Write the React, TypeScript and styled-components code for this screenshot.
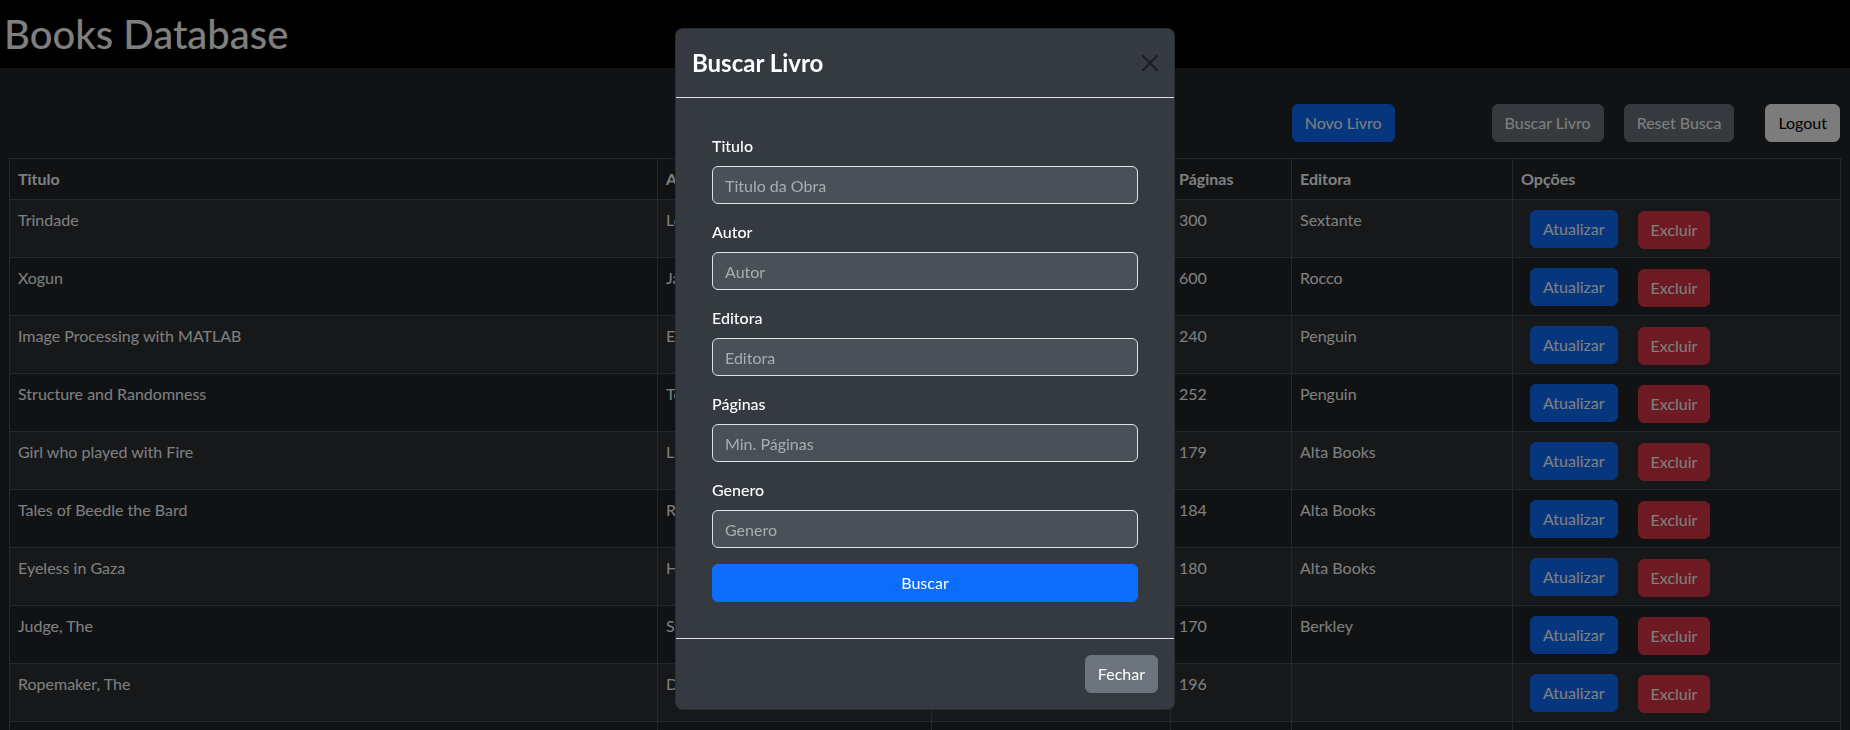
import React from 'react'
import styled, { createGlobalStyle, css } from 'styled-components'

const GlobalStyle = createGlobalStyle`
  html, body {
    margin: 0;
    padding: 0;
  }
  body {
    background: #212529;
    color: #ffffff;
    font-family: Lato, "Noto Sans", "Liberation Sans", sans-serif;
    font-size: 16px;
    line-height: 1.5;
    overflow: hidden;
  }
  * { box-sizing: border-box; }
`

const TopBar = styled.header`
  background: #000;
  padding: 10px 4px;
`

const PageTitle = styled.h1`
  margin: 0;
  font-size: 40px;
  font-weight: 500;
  line-height: 1.2;
  color: #fff;
`

const Toolbar = styled.div`
  display: flex;
  justify-content: flex-end;
  margin: 36px 10px 16px 9px;
`

const variants = {
  primary: css`background: #0d6efd; border-color: #0d6efd; color: #fff;`,
  secondary: css`background: #6c757d; border-color: #6c757d; color: #fff;`,
  danger: css`background: #dc3545; border-color: #dc3545; color: #fff;`,
  light: css`background: #f8f9fa; border-color: #f8f9fa; color: #000;`,
}

type Variant = keyof typeof variants

const Btn = styled.button<{ $variant: Variant; $ml?: number; $mt?: number }>`
  font-family: inherit;
  font-size: 16px;
  line-height: 24px;
  padding: 6px 12px;
  border: 1px solid transparent;
  border-radius: 6px;
  cursor: pointer;
  white-space: nowrap;
  margin-left: ${p => p.$ml || 0}px;
  margin-top: ${p => p.$mt || 0}px;
  ${p => variants[p.$variant]}
`

const Table = styled.table`
  width: 1831px;
  margin-left: 9px;
  border-collapse: collapse;
  table-layout: fixed;
  color: #fff;
  vertical-align: top;
`

const Th = styled.th`
  text-align: left;
  font-weight: 700;
  padding: 8px;
  border: 1px solid #495057;
  line-height: 24px;
`

const Row = styled.tr`
  tbody &:nth-child(odd) {
    background: rgba(255, 255, 255, 0.05);
  }
`

const Td = styled.td`
  padding: 8px;
  border: 1px solid #495057;
  line-height: 24px;
  height: 58px;
  vertical-align: top;
`

const Actions = styled.div`
  display: flex;
  align-items: flex-start;
  height: 41px;
  padding-left: 1px;
`

const Backdrop = styled.div`
  position: fixed;
  inset: 0;
  background: rgba(0, 0, 0, 0.5);
`

const ModalLayer = styled.div`
  position: fixed;
  inset: 0;
  overflow: hidden;
`

const Dialog = styled.div`
  width: 500px;
  margin: 28px auto;
  background: #343a40;
  border: 1px solid rgba(0, 0, 0, 0.175);
  border-radius: 8px;
  color: #fff;
`

const ModalHeader = styled.div`
  display: flex;
  align-items: center;
  justify-content: space-between;
  padding: 16px;
  border-bottom: 1px solid #dee2e6;
`

const ModalTitle = styled.h4`
  margin: 0;
  font-size: 24px;
  font-weight: 700;
  line-height: 1.5;
`

const CloseBtn = styled.button`
  width: 16px;
  height: 16px;
  padding: 0;
  border: 0;
  background: transparent;
  display: flex;
  cursor: pointer;
`

const ModalBody = styled.div`
  padding: 16px;
`

const SearchForm = styled.form`
  padding: 20px;
`

const Field = styled.div`
  margin-bottom: 16px;
`

const Label = styled.label`
  display: block;
  margin-bottom: 8px;
  line-height: 24px;
  font-weight: 500;
`

const Input = styled.input`
  display: block;
  width: 100%;
  height: 38px;
  padding: 6px 12px;
  font-family: inherit;
  font-size: 16px;
  line-height: 24px;
  color: #fff;
  background: #495057;
  border: 1px solid #dee2e6;
  border-radius: 6px;
  &::placeholder {
    color: #a9aeb3;
  }
`

const Submit = styled(Btn)`
  display: block;
  width: 100%;
`

const ModalFooter = styled.div`
  display: flex;
  justify-content: flex-end;
  padding: 12px;
  border-top: 1px solid #dee2e6;
  & > * { margin: 4px; }
`

const books = [
  { titulo: 'Trindade', autor: 'Leon Uris', genero: 'Romance', paginas: 300, editora: 'Sextante' },
  { titulo: 'Xogun', autor: 'James Clavell', genero: 'Romance', paginas: 600, editora: 'Rocco' },
  { titulo: 'Image Processing with MATLAB', autor: 'Eduardo Gomes', genero: 'Tecnologia', paginas: 240, editora: 'Penguin' },
  { titulo: 'Structure and Randomness', autor: 'Terence Tao', genero: 'Matemática', paginas: 252, editora: 'Penguin' },
  { titulo: 'Girl who played with Fire', autor: 'Larsson, Stieg', genero: 'Suspense', paginas: 179, editora: 'Alta Books' },
  { titulo: 'Tales of Beedle the Bard', autor: 'Rowling, J.K.', genero: 'Fantasia', paginas: 184, editora: 'Alta Books' },
  { titulo: 'Eyeless in Gaza', autor: 'Huxley, Aldous', genero: 'Ficção', paginas: 180, editora: 'Alta Books' },
  { titulo: 'Judge, The', autor: 'Steel, Danielle', genero: 'Ficção', paginas: 170, editora: 'Berkley' },
  { titulo: 'Ropemaker, The', autor: 'Dickinson, Peter', genero: 'Fantasia', paginas: 196, editora: '' },
  { titulo: 'Prisoner of Birth, A', autor: 'Archer, Jeffrey', genero: 'Ficção', paginas: 210, editora: 'Rocco' },
  { titulo: 'Dune', autor: 'Herbert, Frank', genero: 'Ficção', paginas: 412, editora: 'Aleph' },
]

const fields = [
  { label: 'Titulo', placeholder: 'Titulo da Obra' },
  { label: 'Autor', placeholder: 'Autor' },
  { label: 'Editora', placeholder: 'Editora' },
  { label: 'Páginas', placeholder: 'Min. Páginas' },
  { label: 'Genero', placeholder: 'Genero' },
]

export default function App() {
  return (
    <>
      <GlobalStyle />
      <TopBar>
        <PageTitle>Books Database</PageTitle>
      </TopBar>

      <Toolbar>
        <Btn $variant="primary">Novo Livro</Btn>
        <Btn $variant="secondary" $ml={97}>Buscar Livro</Btn>
        <Btn $variant="secondary" $ml={20}>Reset Busca</Btn>
        <Btn $variant="light" $ml={31}>Logout</Btn>
      </Toolbar>

      <Table>
        <colgroup>
          <col style={{ width: 648 }} />
          <col style={{ width: 274 }} />
          <col style={{ width: 239 }} />
          <col style={{ width: 121 }} />
          <col style={{ width: 221 }} />
          <col style={{ width: 328 }} />
        </colgroup>
        <thead>
          <tr>
            <Th>Titulo</Th>
            <Th>Autor</Th>
            <Th>Genero</Th>
            <Th>Páginas</Th>
            <Th>Editora</Th>
            <Th>Opções</Th>
          </tr>
        </thead>
        <tbody>
          {books.map(b => (
            <Row key={b.titulo}>
              <Td>{b.titulo}</Td>
              <Td>{b.autor}</Td>
              <Td>{b.genero}</Td>
              <Td>{b.paginas}</Td>
              <Td>{b.editora}</Td>
              <Td>
                <Actions>
                  <Btn $variant="primary" $ml={8} $mt={2}>Atualizar</Btn>
                  <Btn $variant="danger" $ml={20} $mt={3}>Excluir</Btn>
                </Actions>
              </Td>
            </Row>
          ))}
        </tbody>
      </Table>

      <Backdrop />
      <ModalLayer>
        <Dialog>
          <ModalHeader>
            <ModalTitle>Buscar Livro</ModalTitle>
            <CloseBtn aria-label="Close">
              <svg width="16" height="16" viewBox="0 0 16 16">
                <path
                  fill="#000"
                  fillOpacity="0.5"
                  d="M.293.293a1 1 0 0 1 1.414 0L8 6.586 14.293.293a1 1 0 1 1 1.414 1.414L9.414 8l6.293 6.293a1 1 0 0 1-1.414 1.414L8 9.414l-6.293 6.293a1 1 0 0 1-1.414-1.414L6.586 8 .293 1.707a1 1 0 0 1 0-1.414z"
                />
              </svg>
            </CloseBtn>
          </ModalHeader>
          <ModalBody>
            <SearchForm onSubmit={e => e.preventDefault()}>
              {fields.map(f => (
                <Field key={f.label}>
                  <Label>{f.label}</Label>
                  <Input placeholder={f.placeholder} />
                </Field>
              ))}
              <Submit $variant="primary" type="submit">Buscar</Submit>
            </SearchForm>
          </ModalBody>
          <ModalFooter>
            <Btn $variant="secondary">Fechar</Btn>
          </ModalFooter>
        </Dialog>
      </ModalLayer>
    </>
  )
}
